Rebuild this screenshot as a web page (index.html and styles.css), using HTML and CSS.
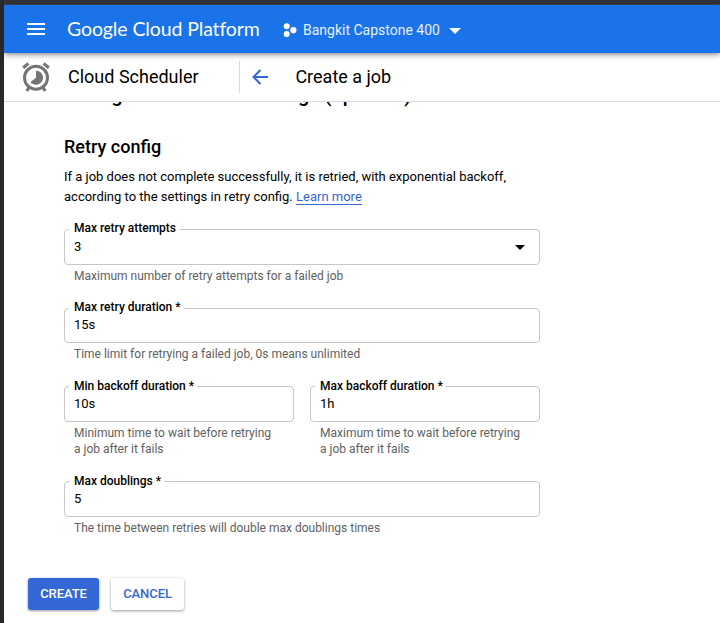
FILE: index.html
```html
<!DOCTYPE html>
<html lang="en">
<head>
<meta charset="utf-8">
<title>Create a job</title>
<link rel="stylesheet" href="styles.css">
</head>
<body>
<div class="window">
  <header class="topbar">
    <svg class="menu" width="18" height="12" viewBox="0 0 18 12"><path fill="#fff" d="M0 0h18v2H0zM0 5h18v2H0zM0 10h18v2H0z"/></svg>
    <span class="brand">Google Cloud Platform</span>
    <svg class="dots" width="14" height="15" viewBox="0 0 14 15" fill="#fff"><circle cx="3.7" cy="3.2" r="3"/><circle cx="3.7" cy="11" r="3"/><circle cx="10.4" cy="7.2" r="3.1"/></svg>
    <span class="project">Bangkit Capstone 400</span>
    <svg class="caret" width="12" height="6" viewBox="0 0 12 6"><path fill="#fff" d="M0 0h12L6 6z"/></svg>
  </header>
  <div class="toolbar">
    <svg class="clock" width="28" height="30" viewBox="0 0 28 30">
      <g fill="none" stroke="#757575">
        <circle cx="14" cy="15.7" r="11.5" stroke-width="3"/>
        <path stroke-width="3.2" d="M1.2 5.7 6.4 1.6M26.8 5.7 21.6 1.6M7 25.3 4.8 29M21 25.3l2.2 3.7"/>
      </g>
      <path fill="#757575" d="M14 8.7a7 7 0 1 1-5.6 11.2L14 15.7z"/>
    </svg>
    <span class="product">Cloud Scheduler</span>
    <div class="page-head">
      <svg width="16" height="16" viewBox="0 0 16 16"><path fill="none" stroke="#3367d6" stroke-width="2" d="M16 8H2M8.5 1 1.5 8l7 7"/></svg>
      <h1>Create a job</h1>
    </div>
  </div>
  <main>
    <div class="clip"><h2>Configure advanced settings (optional)</h2></div>
    <h3>Retry config</h3>
    <p class="intro">If a job does not complete successfully, it is retried, with exponential backoff,<br>according to the settings in retry config. <a>Learn more</a></p>
    <div class="field upper">
      <div class="box"><label>Max retry attempts</label><span>3</span><svg width="10" height="5" viewBox="0 0 10 5"><path d="M0 0h10L5 5z"/></svg></div>
      <p>Maximum number of retry attempts for a failed job</p>
    </div>
    <div class="field upper duration">
      <div class="box"><label>Max retry duration *</label><span>15s</span></div>
      <p>Time limit for retrying a failed job, 0s means unlimited</p>
    </div>
    <div class="pair">
      <div class="field">
        <div class="box"><label>Min backoff duration *</label><span>10s</span></div>
        <p>Minimum time to wait before retrying<br>a job after it fails</p>
      </div>
      <div class="field">
        <div class="box"><label>Max backoff duration *</label><span>1h</span></div>
        <p>Maximum time to wait before retrying<br>a job after it fails</p>
      </div>
    </div>
    <div class="field">
      <div class="box"><label>Max doublings *</label><span>5</span></div>
      <p>The time between retries will double max doublings times</p>
    </div>
  </main>
  <div class="actions"><button class="primary">CREATE</button><button>CANCEL</button></div>
</div>
</body>
</html>
```
FILE: styles.css
```css
* { box-sizing: border-box; }
body { margin: 0; background: #fff; font-family: Roboto, sans-serif; color: #000; }
h1, h2, h3, p { margin: 0; }
svg { display: block; flex: none; }
.window { height: 623px; overflow: hidden; border-left: 4px solid #28282c; }
.window::before { content: ""; display: block; height: 4px; margin-left: -4px; background: #353539; border-bottom: 1px solid #484a50; }
.topbar { position: relative; height: 48px; display: flex; align-items: center; background: #1a73e8; color: #fff; padding-left: 23px; box-shadow: 0 1px 6px rgba(0,0,0,.55); white-space: nowrap; }
.brand { width: 193px; margin: 0 0 0 22px; font: 19.5px/24px Lato, sans-serif; letter-spacing: -.12px; }
.dots { margin: 2px 0 0 23px; }
.project { width: 137px; margin: 2px 0 0 6px; font-size: 14px; color: #e8f0fe; }
.caret { margin: 3px 0 0 9px; }
.toolbar { height: 49px; display: flex; align-items: center; border-bottom: 1px solid #dadce0; padding-left: 18px; white-space: nowrap; }
.product { width: 171px; margin: 0 0 2px 18px; font-size: 18px; }
.page-head { height: 32px; display: flex; align-items: center; border-left: 1px solid #dadce0; padding-left: 12px; }
h1 { margin: 0 0 2px 27.4px; font-size: 18px; font-weight: 400; }
main { width: 536px; padding: 0 0 0 60px; }
.clip { height: 33px; overflow: hidden; }
h2 { margin-top: -19px; font-size: 20px; line-height: 24px; font-weight: 500; white-space: nowrap; }
h3 { font-size: 18px; line-height: 24px; font-weight: 500; }
.intro { margin: 8px 0 22px; font-size: 13px; line-height: 20px; white-space: nowrap; }
.intro a { color: #3367d6; border-bottom: 1px solid #3367d6; }
.field { flex: 1; margin-bottom: 24px; }
.box { position: relative; height: 36px; display: flex; align-items: center; justify-content: space-between; border: 1px solid #c6c6c6; border-radius: 4px; padding: 0 14px 0 9px; font-size: 13px; }
.box label { position: absolute; left: 4px; top: -8px; padding: 0 3px 0 5px; background: #fff; font-size: 12px; line-height: 14px; font-weight: 500; }
.box span { margin-bottom: 2px; }
.upper .box label { top: -9px; padding-right: 4px; }
.upper.duration .box label { padding-right: 3px; }
.field p { padding: 3px 0 0 10px; font-size: 12px; line-height: 16px; color: #616161; white-space: nowrap; }
.duration .box { height: 35px; }
.pair { display: flex; gap: 16px; }
.actions { display: flex; gap: 12px; margin: 42px 0 0 24px; }
button { height: 32px; width: 73px; border: 0; border-radius: 3px; padding: 0 0 1px; background: #fff; color: #3367d6; font: 500 13px Roboto, sans-serif; letter-spacing: -.08px; box-shadow: 0 1px 3px rgba(0,0,0,.4); }
.primary { width: 71px; background: #3367d6; color: #fff; }
```
